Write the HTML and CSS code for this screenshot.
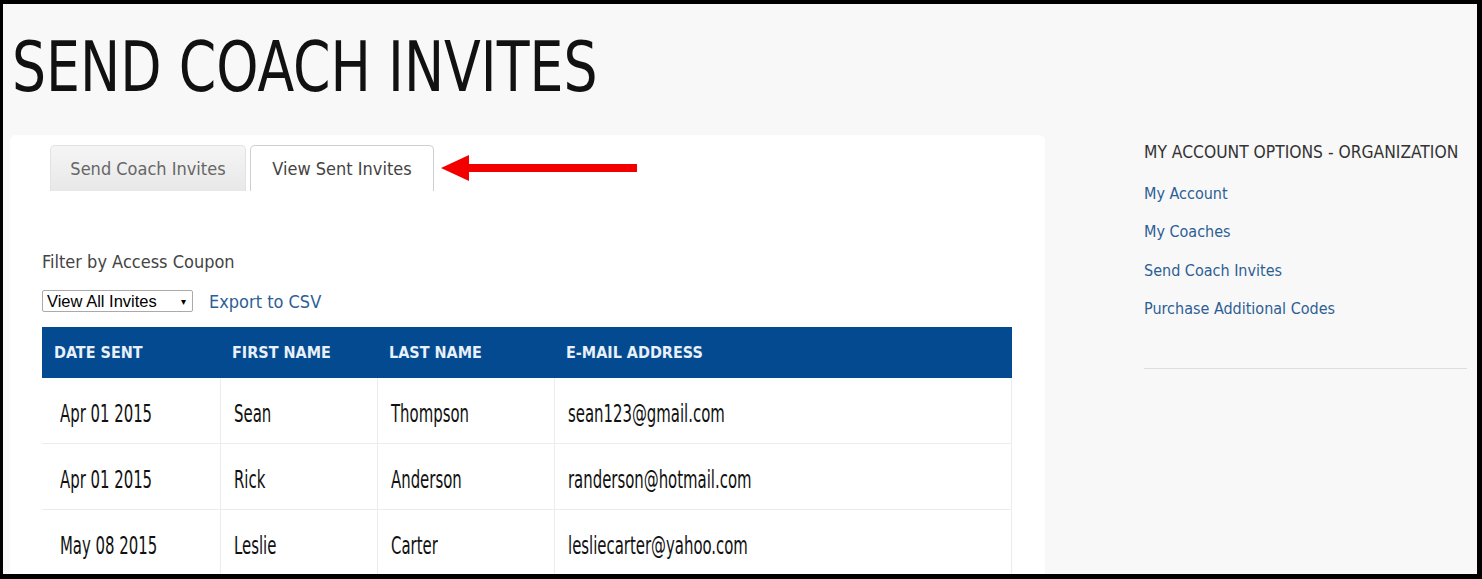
FILE: index.html
```html
<!DOCTYPE html>
<html>
<head>
<meta charset="utf-8">
<link rel="stylesheet" href="styles.css">
</head>
<body>
<div class="frame">
  <h1 class="title"><span>SEND COACH INVITES</span></h1>
  <div class="main">
    <div class="card">
      <div class="tabs">
        <div class="tab tab-off">Send Coach Invites</div>
        <div class="tab tab-on">View Sent Invites</div>
      </div>
      <svg class="arrow" width="200" height="30" viewBox="0 0 200 30">
        <polygon points="0,14 28,1 28,10 196,10 196,18 28,18 28,27" fill="#f20000"/>
      </svg>
      <div class="filter">
        <div class="filter-label">Filter by Access Coupon</div>
        <div class="filter-row">
          <div class="select"><span>View All Invites</span><span class="caret">▾</span></div>
          <a class="export">Export to CSV</a>
        </div>
      </div>
      <table class="invites">
        <thead>
          <tr><th class="c1">DATE SENT</th><th class="c2">FIRST NAME</th><th class="c3">LAST NAME</th><th>E-MAIL ADDRESS</th></tr>
        </thead>
        <tbody>
          <tr><td><span>Apr 01 2015</span></td><td><span>Sean</span></td><td><span>Thompson</span></td><td><span>sean123@gmail.com</span></td></tr>
          <tr><td><span>Apr 01 2015</span></td><td><span>Rick</span></td><td><span>Anderson</span></td><td><span>randerson@hotmail.com</span></td></tr>
          <tr><td><span>May 08 2015</span></td><td><span>Leslie</span></td><td><span>Carter</span></td><td><span>lesliecarter@yahoo.com</span></td></tr>
        </tbody>
      </table>
    </div>
    <aside class="sidebar">
      <h2 class="side-title">MY ACCOUNT OPTIONS - ORGANIZATION</h2>
      <ul class="side-links">
        <li><a>My Account</a></li>
        <li><a>My Coaches</a></li>
        <li><a>Send Coach Invites</a></li>
        <li><a>Purchase Additional Codes</a></li>
      </ul>
      <div class="side-rule"></div>
    </aside>
  </div>
</div>
</body>
</html>
```
FILE: styles.css
```css
html, body {
  margin: 0;
  padding: 0;
  background: #000;
}
.frame {
  box-sizing: border-box;
  width: 1482px;
  height: 579px;
  border-style: solid;
  border-color: #000;
  border-width: 4px 5px 5px 3px;
  background: #f8f8f8;
  overflow: hidden;
  font-family: "DejaVu Sans Condensed", "DejaVu Sans", sans-serif;
}
.title {
  margin: 0;
  height: 131px;
  padding-left: 9px;
  font-weight: normal;
  font-size: 70px;
  line-height: 1;
  color: #111;
}
.title span {
  display: inline-block;
  margin-top: 28px;
  transform: scaleX(0.853);
  transform-origin: left top;
  white-space: nowrap;
}
.main {
  display: flex;
  padding-left: 7px;
}
.card {
  position: relative;
  width: 1035px;
  height: 460px;
  background: #fff;
  border-radius: 6px;
  padding: 10px 0 0 32px;
  box-sizing: border-box;
}
.tabs {
  display: flex;
  gap: 4px;
  padding-left: 8px;
  height: 46px;
}
.tab {
  box-sizing: border-box;
  height: 46px;
  border: 1px solid #dcdcdc;
  border-bottom: none;
  border-radius: 5px 5px 0 0;
  font-size: 18px;
  color: #555;
  display: flex;
  align-items: center;
  justify-content: center;
}
.tab-off {
  width: 196px;
  background: linear-gradient(#f5f5f5, #e8e8e8);
  border-color: #e2e2e2;
  color: #666;
}
.tab-on {
  width: 184px;
  background: #fff;
  border-color: #cfcfcf;
  color: #444;
}
.arrow {
  position: absolute;
  left: 431px;
  top: 19px;
}
.filter {
  padding-top: 60px;
}
.filter-label {
  font-size: 18px;
  color: #444;
  height: 30px;
}
.filter-row {
  display: flex;
  align-items: center;
  gap: 16px;
  margin-top: 9px;
  height: 22px;
}
.select {
  box-sizing: border-box;
  width: 151px;
  height: 22px;
  border: 1px solid #aaa;
  border-radius: 2px;
  background: #fff;
  display: flex;
  align-items: center;
  justify-content: space-between;
  padding: 0 4px;
  font-family: "Liberation Sans", Arial, sans-serif;
  font-size: 16.5px;
  color: #000;
}
.caret {
  font-size: 10px;
  padding-right: 2px;
}
.export {
  font-size: 18px;
  color: #2d5e95;
}
.invites {
  margin-top: 15px;
  width: 970px;
  border-collapse: collapse;
  table-layout: fixed;
}
.invites th {
  background: #034a90;
  color: #e8f0fa;
  font-weight: bold;
  font-size: 16px;
  text-align: left;
  height: 51px;
  padding: 0 0 0 12px;
}
.invites .c1 { width: 166px; }
.invites .c2 { width: 145px; }
.invites .c3 { width: 165px; }
.invites td {
  height: 59px;
  padding: 6px 0 0 13px;
  border: 1px solid #ececec;
  border-top: none;
  font-size: 24px;
  color: #111;
}
.invites td:first-child {
  border-left: none;
  padding-left: 18px;
}
.invites td span {
  display: inline-block;
  transform: scaleX(0.69);
  transform-origin: left center;
  white-space: nowrap;
}
.sidebar {
  margin-left: 99px;
  width: 323px;
  padding-top: 7px;
}
.side-title {
  margin: 0;
  font-weight: normal;
  font-size: 17.3px;
  color: #333;
  white-space: nowrap;
  height: 32px;
}
.side-links {
  list-style: none;
  margin: 0;
  padding: 0;
}
.side-links li {
  height: 38.5px;
  display: flex;
  align-items: center;
  font-size: 16px;
  color: #2d5e95;
}
.side-rule {
  margin-top: 40px;
  border-top: 1px solid #dedede;
}
```
